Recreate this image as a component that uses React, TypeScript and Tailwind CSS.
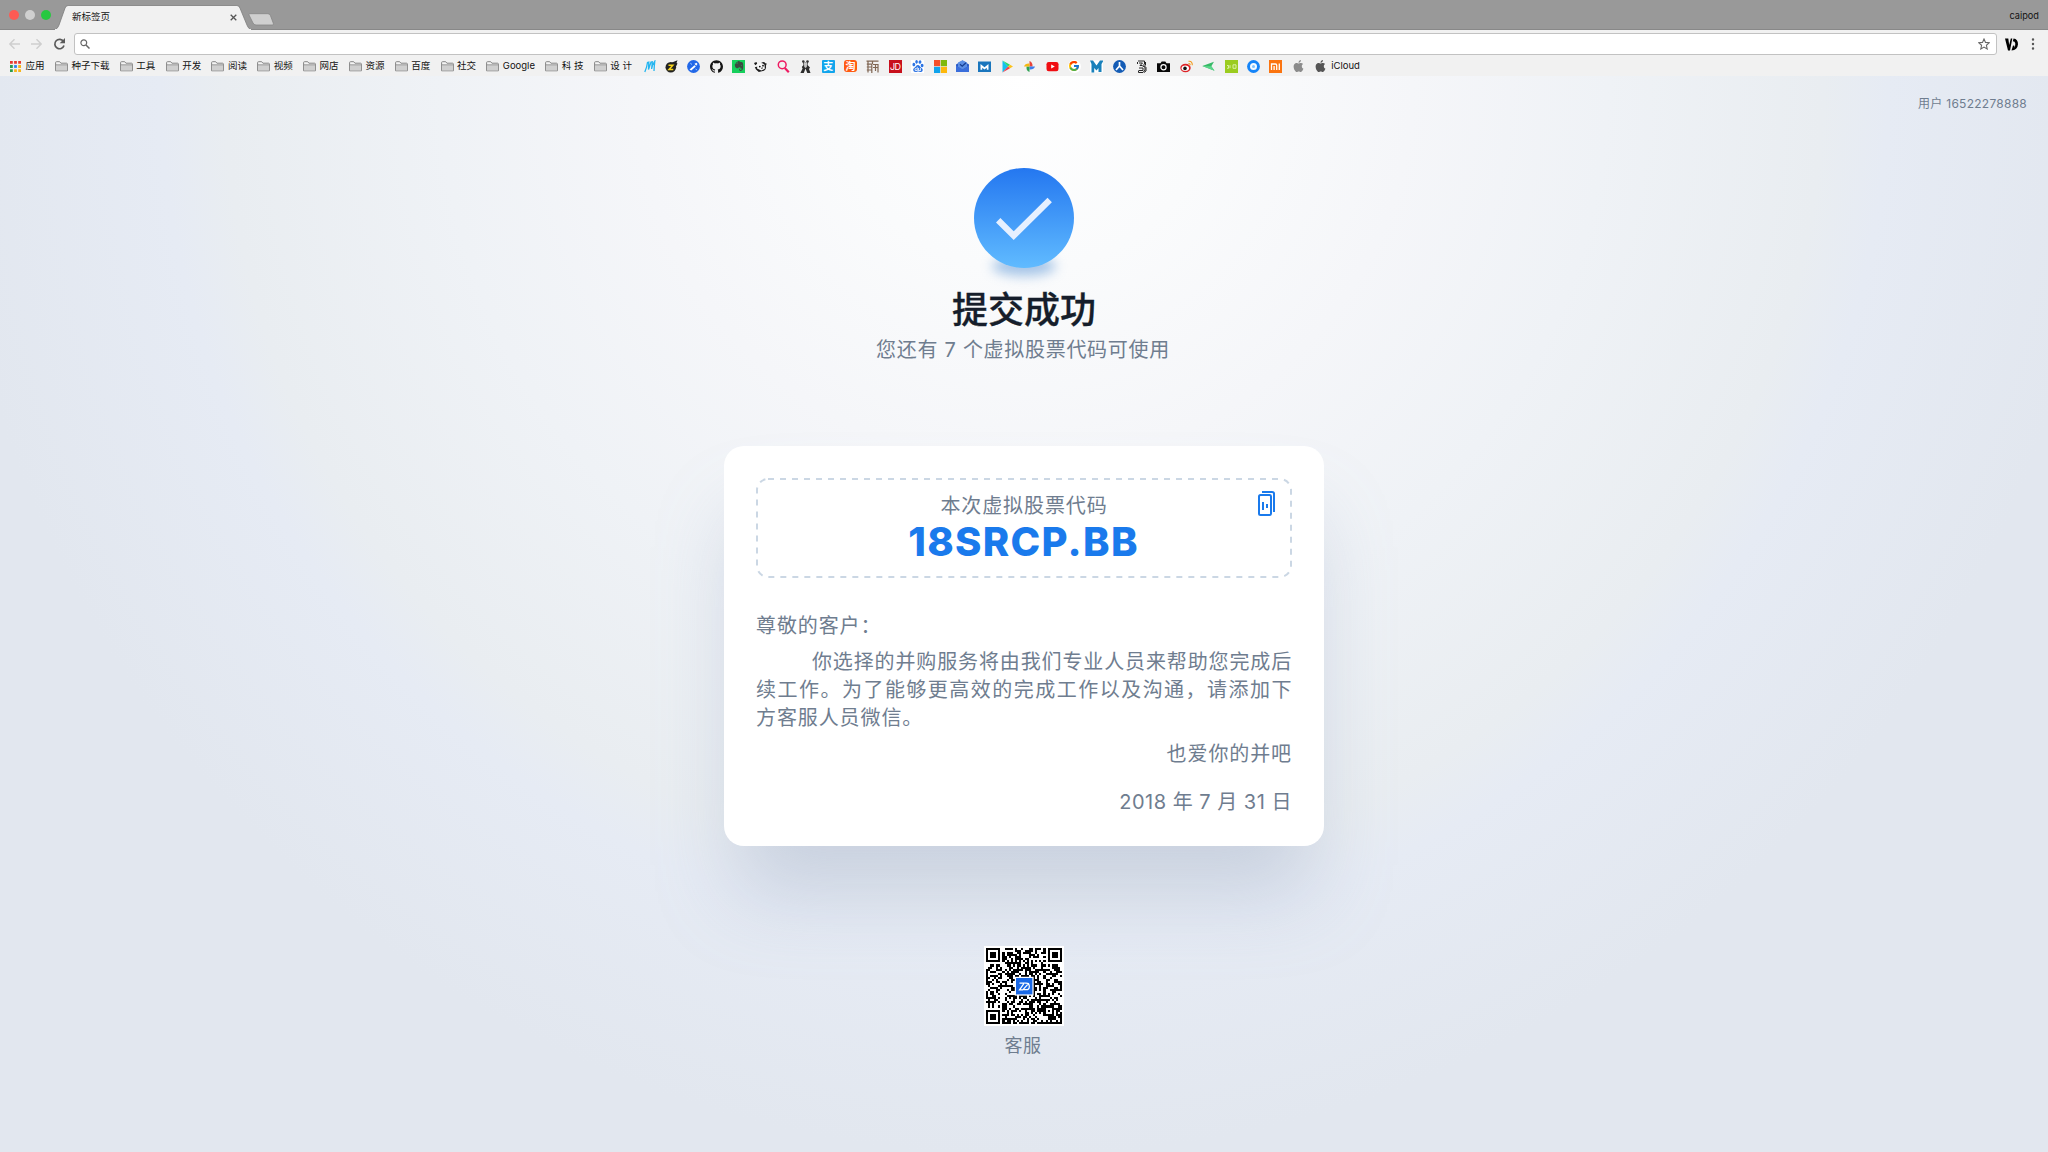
import React from "react";
import { SiGithub, SiEvernote, SiApple, SiBaidu } from "react-icons/si";
import { FcGoogle } from "react-icons/fc";

const zh = "font-['Inter','Noto_Sans_CJK_SC',sans-serif]";

function Folder() {
  return (
    <svg className="h-[11px] w-[13px] shrink-0" viewBox="0 0 13 11">
      <path d="M.6 9.8V1.6Q.6.7 1.5.7h3.2l1.2 1.5h5.6q.9 0 .9.9v6.7z" fill="#f4f4f4" stroke="#858585" />
      <path d="M1 3.9h11v5.5H1z" fill="#cfcfcf" />
      <path d="M.6 3.8h11.8" stroke="#858585" strokeWidth=".8" />
    </svg>
  );
}

const folders = ["种子下载", "工具", "开发", "阅读", "视频", "网店", "资源", "百度", "社交", "Google", "科 技", "设 计"];

function G({ children }: { children: React.ReactNode }) {
  return (
    <svg className="h-[13px] w-[13px] shrink-0" viewBox="0 0 13 13">
      {children}
    </svg>
  );
}

function SiteIcons() {
  return (
    <>
      <G><path d="M1.800 12Q4 7 4.500 2.500L5.800 2.200 5.500 9.500Q7 5 8 2L9.300 1.800 8.600 9Q9.500 4 11.800 1.200 11.200 6 11 11" fill="none" stroke="#23b5f0" strokeWidth="1.300" /></G>
      <G><circle cx="5.800" cy="7.300" r="5.300" fill="#222" /><path d="M7 2.500 12.500.3 11.500 3l1 .5-2 4z" fill="#222" /><path d="M3.500 5.300h4.300L4 9.400h4.300" fill="none" stroke="#f8d51c" strokeWidth="1.500" /></G>
      <G><circle cx="6.500" cy="6.500" r="6.400" fill="#2268e8" /><path d="m2.500 9.500 5-4.200 1.300 1.300-4.500 4zM7.500 3.800l2-1 1 1.300-1.300 1.600z" fill="#fff" /><path d="M3.300 3.200 5 4.500M8.500 9l1.600 1" stroke="#9fc6ff" /></G>
      <SiGithub className="h-[13px] w-[13px] shrink-0 text-[#151515]" />
      <span className="flex h-[13px] w-[13px] shrink-0 items-center justify-center bg-[#16cf5c]"><SiEvernote className="h-[10px] w-[10px] text-[#3c4a42]" /></span>
      <G><path d="M0 3 2.500 2l.7 1.800-2 1.500zM7.500 2.800q2.500-2 3.800.5l1.400.2-.8 2.500q.8 3-1.900 4.700L4.800 12 2 9.500.8 7.200l3-.7z" fill="#1d1d1d" /><path d="M3.500 4q4-2.400 7 .8l.3 4-3.500 1.700L3 8.500z" fill="#f7f7f7" /><circle cx="5.800" cy="6.600" r=".9" fill="#111" /><circle cx="9" cy="5.700" r=".9" fill="#111" /><path d="M7 8.300l2-.4" stroke="#111" strokeWidth=".8" /></G>
      <G><circle cx="5.200" cy="4.800" r="3.900" fill="none" stroke="#ee1b62" strokeWidth="1.500" /><path d="m7.800 8 4 4.200" stroke="#ee1b62" strokeWidth="2.200" /></G>
      <G><circle cx="4.300" cy="1.500" r="1.300" fill="#333" /><circle cx="8.500" cy="1.500" r="1.300" fill="#333" /><path d="M4 2h5l-.5 3 2.500 2.500-1 1.500 1.500 4H8.300L6.500 8.500 4.800 13H1.400L3.600 8.500 2.800 7l1.700-2z" fill="#2c2c2c" /><path d="M4.800 2.300h3.400L7.800 7l-1.300 1-1.200-1z" fill="#c8c8c8" /></G>
      <span className={`flex h-[13px] w-[13px] shrink-0 items-center justify-center rounded-[1px] bg-[#11a5ec] text-[10px] leading-none font-bold text-white ${zh}`}>支</span>
      <span className={`flex h-[12px] w-[13px] shrink-0 items-center justify-center rounded-[3px] bg-[#ff5a10] text-[10px] leading-none font-bold text-white ${zh}`}>淘</span>
      <G><path d="M.5 1.200h12M.8 4.200h5M.8 7h4.500M.8 10h4.500M2 1v11.500M5.800 4v9M7 4.500h5.500M7 7.500h5.500M12 4v8.500M9.500 4v7M6.500 1v3" fill="none" stroke="#806754" strokeWidth="1.200" /></G>
      <span className="flex h-[13px] w-[13px] shrink-0 items-center justify-center bg-[#c8101c] font-['Inter'] text-[9px] leading-none tracking-[-0.5px] text-white">JD</span>
      <span className="flex h-[13px] w-[13px] shrink-0 items-center justify-center bg-white"><SiBaidu className="h-[12px] w-[12px] text-[#2b73e3]" /></span>
      <G><path d="M0 0h6.200v6.200H0z" fill="#f4502a" /><path d="M6.800 0H13v6.200H6.800z" fill="#7fb90a" /><path d="M0 6.800h6.200V13H0z" fill="#10a3ec" /><path d="M6.800 6.800H13V13H6.800z" fill="#fdb80c" /></G>
      <G><path d="M0 4.500 6.500.5 13 4.500V12H0z" fill="#2b5ac4" /><path d="M2 2.500 6.500.300 11 2.500v4.500L6.500 9.500 2 7z" fill="#5b8ee4" /><path d="m4 4.300 2.200 2L10 2.700" fill="none" stroke="#143c90" strokeWidth="1.200" /><path d="m0 5.500 6.500 4L13 5.500V12H0z" fill="#3a6edb" /></G>
      <G><path d="M0 1.500h13v10.500H0z" fill="#1a76bd" /><path d="M2.500 9.800V4l4 3.200 4-3.200v5.800H8.800V7.700L6.500 9.500 4.200 7.700v2.100z" fill="#fff" /></G>
      <G><path d="M1.500.6 7 6.500l-5.500 6z" fill="#16c0ee" /><path d="M1.500.6 9 4.800 7 6.600z" fill="#20d872" /><path d="M9 4.800 12 6.500 9 8.300 7 6.500z" fill="#fcc218" /><path d="M1.500 12.500 9 8.300 7 6.500z" fill="#f23b4b" /></G>
      <G><path d="M6.500 6.500V1q3.300 1 3 5.500z" fill="#e8443a" /><path d="M6.500 6.500H12q-1 3.300-5.500 3z" fill="#3b7ded" /><path d="M6.500 6.500V12q-3.300-1-3-5.500z" fill="#2ea252" /><path d="M6.500 6.500H1q1-3.300 5.500-3z" fill="#f6b811" /></G>
      <G><rect x=".5" y="2" width="12" height="9.200" rx="2.200" fill="#f00d12" /><path d="m5.200 4.600 3.600 2-3.600 2z" fill="#fff" /></G>
      <span className="flex h-[13px] w-[13px] shrink-0 items-center justify-center rounded-full bg-white"><FcGoogle className="h-[12px] w-[12px]" /></span>
      <G><path d="M0 .5h13v12H0z" fill="#fff" /><path d="M0 .5h3l3.500 5 3.500-5h3v1l-1.500 2.500v8h-3V8L6.500 10.500 4.200 8v4.500H1.500V4z" fill="#1981bb" /></G>
      <G><circle cx="6.500" cy="6.500" r="6.400" fill="#145cb5" /><path d="M6.500 2v4.500M6.500 6 3 10M6.500 6 10 10" stroke="#fff" strokeWidth="1.700" /></G>
      <G><path d="M3 1h6.500v3L7.500 6l2.500 1v3l-2 2.500H3.500v-2M4 3h3.500L5 5.500h2M4 8h4v2.500H4M2.500 2v2M10.500 2v3l-1 1 1.500 1.500V11l-2 1.500" fill="none" stroke="#262626" strokeWidth="1" /></G>
      <G><path d="M0 3.200h3.500L4.700 1.500h3.600l1.200 1.700H13V12H0z" fill="#080808" /><circle cx="6.500" cy="7.300" r="2.600" fill="none" stroke="#fff" strokeWidth="1.200" /></G>
      <G><ellipse cx="5.500" cy="8" rx="5.200" ry="4.200" fill="#dd2226" /><ellipse cx="5.300" cy="8.300" rx="3.700" ry="2.700" fill="#fff" /><circle cx="5" cy="8.400" r="1.800" fill="#141414" /><path d="M8.500 1.300q4-.5 3.800 4M8.500 3.600q1.800-.3 1.600 1.600" fill="none" stroke="#f39a1e" strokeWidth="1.100" /></G>
      <G><path d="M.3 6 12 1.800 9.300 6.300l3.200 4.500z" fill="#37b967" /><path d="m.3 6 9 .3 3.200 4.500z" fill="#5bd68a" /></G>
      <G><path d="M0 0h13v13H0z" fill="#9bcc1f" /><path d="M2 5.500h1.500v2.800H2M5 5.200v3M8 4.800h3v3.500H8z" fill="none" stroke="#e2f5b2" strokeWidth=".9" /></G>
      <G><circle cx="6.500" cy="6.500" r="6.400" fill="#1484f8" /><circle cx="6.500" cy="6.500" r="3.500" fill="#f4faff" /><circle cx="6.500" cy="6.500" r="1.500" fill="#7fc2fc" /></G>
      <G><path d="M0 0h13v13H0z" fill="#fb7410" /><path d="M2.500 10V4h4q1.200 0 1.200 1.200V10M5.100 6v4M10.300 3.500V10" fill="none" stroke="#fff" strokeWidth="1.300" /></G>
      <SiApple className="h-[12px] w-[13px] shrink-0 text-[#8b8b8b]" />
      <span className="flex items-center gap-[4px]"><SiApple className="h-[12px] w-[13px] shrink-0 text-[#555]" /><span>iCloud</span></span>
    </>
  );
}

function Browser() {
  return (
    <header className={`h-[76px] bg-[#f1f1f1] text-[9.5px] text-[#111] ${zh}`}>
      <div className="flex h-[30px] items-end justify-between border-b border-[#888] bg-[#999]">
        <div className="flex h-full items-center gap-[4px]">
          <div className="ml-[9px] flex gap-[6px]">
            <span className="h-[10px] w-[10px] rounded-full bg-[#fc5b54]" />
            <span className="h-[10px] w-[10px] rounded-full bg-[#cfcfcf]" />
            <span className="h-[10px] w-[10px] rounded-full bg-[#27c840]" />
          </div>
          <div className="relative mt-[6px] h-[25px] w-[196px]">
            <svg className="absolute inset-0 h-full w-full" viewBox="0 0 195 25" preserveAspectRatio="none">
              <path d="M1 24Q3 23 4 20L10 3q1-2.500 3-2.500h168q2 0 3 2.500l7 17q1 3 3 4v2H0z" fill="#f1f1f1" stroke="#7d7d7d" strokeWidth=".8" />
              <path d="M0 24.500h195" stroke="#f1f1f1" strokeWidth="1" />
            </svg>
            <div className="relative flex h-[25px] items-center justify-between pr-[14px] pl-[17px]">
              <span>新标签页</span>
              <svg className="h-[7px] w-[7px]" viewBox="0 0 7 7"><path d="m.7.7 5.600 5.600M6.300.7.700 6.300" stroke="#555" strokeWidth="1.300" /></svg>
            </div>
          </div>
          <svg className="mt-[9px] -ml-[7px] h-[13px] w-[27px]" viewBox="0 0 27 13"><path d="M1.500.7h18.300q2 0 2.700 2l2.800 7.500q.6 1.800-1 1.800H8Q6 12 5 10L1 2Q.6.7 1.500.7z" fill="#cfcfcf" stroke="#858585" strokeWidth=".8" /></svg>
        </div>
        <span className="mr-[9px] mb-[6px] text-[9.2px]">caipod</span>
      </div>
      <div className="flex h-[28px] items-center">
        <svg className="ml-[8px] h-[14px] w-[58px]" viewBox="0 0 58 14">
          <path d="M12 7H2M6.500 2.200 1.800 7l4.700 4.800M23 7h10M28.500 2.200 33.200 7l-4.700 4.800" fill="none" stroke="#cecece" strokeWidth="1.400" />
          <path d="M55.500 4.500A4.700 4.700 0 1 0 56 8.500" fill="none" stroke="#5a5a5a" strokeWidth="1.700" />
          <path d="M57 1v5.300h-5.300z" fill="#5a5a5a" />
        </svg>
        <div className="ml-[7.5px] flex h-[22px] w-[1923px] items-center justify-between rounded-[3px] border border-[#c2c2c2] bg-white px-[5.5px]">
          <svg className="h-[10px] w-[10px]" viewBox="0 0 10 10"><circle cx="3.800" cy="3.800" r="2.900" fill="none" stroke="#666" strokeWidth="1.200" /><path d="m6 6 3.500 3.500" stroke="#666" strokeWidth="1.500" /></svg>
          <svg className="h-[12px] w-[12px]" viewBox="0 0 12 12"><path d="m6 1 1.500 3.400 3.700.4-2.800 2.500.8 3.700L6 9.100 2.800 11l.8-3.700L.8 4.800l3.700-.4z" fill="none" stroke="#666" strokeWidth="1.100" /></svg>
        </div>
        <svg className="ml-[8px] h-[13px] w-[13px]" viewBox="0 0 13 13"><path d="M0 .5h3.300L4.200 7 5.800.5h1.500L5 12.500H3zM6.500 12.500 8 7.500l1.500.3-.6 2Q10.500 8.500 10.300 5.500 10 3.300 7.800 3.300L8.600.5Q13 1 13 6.300 12.500 12 6.500 12.500z" fill="#000" /></svg>
        <svg className="ml-[13.500px] h-[12px] w-[4px]" viewBox="0 0 4 12"><g fill="#555"><circle cx="2" cy="1.500" r="1.200" /><circle cx="2" cy="6" r="1.200" /><circle cx="2" cy="10.500" r="1.200" /></g></svg>
      </div>
      <div className="flex h-[16px] items-center leading-none whitespace-pre">
        <svg className="mr-[4.5px] ml-[10px] h-[11px] w-[11px]" viewBox="0 0 11 11">
          <path d="M0 0h2.800v2.800H0zM4.100 0h2.800v2.800H4.100zM8.200 0H11v2.800H8.200z" fill="#e8392f" />
          <path d="M0 4.100h2.800v2.800H0zM0 8.200h2.800V11H0z" fill="#2b9c4c" /><path d="M4.100 4.100h2.800v2.800H4.100z" fill="#2a83f0" />
          <path d="M8.200 4.100H11v2.800H8.200zM4.100 8.200h2.800V11H4.100zM8.200 8.200H11V11H8.200z" fill="#f7b51b" />
        </svg>
        <span className="mr-[10px] w-[19.5px]">应用</span>
        <div className="flex w-[577px] items-center justify-between">
          {folders.map((f) => (
            <span key={f} className="flex items-center gap-[3.5px]"><Folder /><span>{f}</span></span>
          ))}
        </div>
        <div className="ml-[10.5px] flex items-center gap-[9.4px]"><SiteIcons /></div>
      </div>
    </header>
  );
}

const N = 37;
function isDark(r: number, c: number): boolean {
  const corners = [[0, 0], [0, N - 7], [N - 7, 0]];
  for (const [a, b] of corners) {
    const y = r - a, x = c - b;
    if (y >= -1 && y <= 7 && x >= -1 && x <= 7) {
      const d = Math.max(Math.abs(y - 3), Math.abs(x - 3));
      return d === 3 || d <= 1;
    }
  }
  const d = Math.max(Math.abs(r - 30), Math.abs(c - 30));
  if (d <= 2) return d !== 1;
  if (r === 6 || c === 6) return (r + c) % 2 === 0;
  let h = (r * 73856093) ^ (c * 19349663) ^ 0x5bd1e995;
  h = Math.imul(h ^ (h >>> 13), 1274126177);
  return ((h ^ (h >>> 16)) & 255) < 132;
}

let modules = "";
for (let r = 0; r < N; r++) for (let c = 0; c < N; c++) if (isDark(r, c)) modules += `M${c} ${r}h1v1h-1z`;

function QrCode() {
  return (
    <svg className="h-[80px] w-[80px] bg-white" viewBox="-1 -1 39 39">
      <path d={modules} fill="#000" shapeRendering="crispEdges" />
      <path d="M14 14h9.200v9.200H14z" fill="#fff" />
      <path d="M14.600 14.600h8v8h-8z" fill="#1968e6" />
      <path d="M16.300 17.100h2.300l-2.300 3.300h1.600l3-3.300M18.300 20.300h1.200a1.600 1.600 0 0 0 0-3.200h-.5" fill="none" stroke="#fff" strokeWidth=".6" />
    </svg>
  );
}

export default function App() {
  return (
    <div className="flex h-[1152px] w-[2048px] flex-col overflow-hidden">
      <Browser />
      <main className={`relative flex flex-1 flex-col items-center bg-[radial-gradient(circle_1080px_at_50%_0,#ffffff_0%,#fafbfc_18%,#f5f6f9_36%,#eff2f6_54%,#e9edf1_74%,#e6ebf4_80%,#e2e7ef_100%)] text-[#6f7d8f] ${zh}`}>
        <div className="absolute top-[19px] right-[21px] text-[12px] leading-[18px] tracking-[0.26px]">用户 16522278888</div>
        <div className="relative mt-[92px] h-[100px] w-[100px]">
          <div className="absolute top-[88px] left-[18px] h-[20px] w-[64px] rounded-[50%] bg-[#3f83cf]/45 blur-[6px]" />
          <svg className="relative h-[100px] w-[100px]" viewBox="0 0 100 100">
            <defs><linearGradient id="disc" x1="0" y1="0" x2="0" y2="1"><stop stopColor="#2477f0" /><stop offset="1" stopColor="#60bbff" /></linearGradient></defs>
            <circle cx="50" cy="50" r="50" fill="url(#disc)" />
            <path d="m24.200 52.200 15.500 15.500L75.700 32" fill="none" stroke="#e6f0ff" strokeWidth="6.200" />
          </svg>
        </div>
        <h1 className="mt-[17px] text-[36px] leading-[50px] font-medium text-[#161e2b] [-webkit-text-stroke:0.3px_#161e2b]">提交成功</h1>
        <p className="mt-px -ml-[2px] h-[28px] text-[20px] leading-[28px] tracking-[0.7px] whitespace-nowrap">您还有 7 个虚拟股票代码可使用</p>
        <section className="mt-[82px] h-[400px] w-[600px] shrink-0 rounded-[20px] bg-white px-[32px] pt-[32px] text-[20px] leading-[28px] tracking-[0.9px] shadow-[0_60px_80px_-14px_rgba(142,157,190,0.36)]">
          <div className="relative flex h-[100px] flex-col items-center">
            <svg className="absolute inset-0 h-full w-full" viewBox="0 0 536 100">
              <rect x="1" y="1" width="534" height="98" rx="11" fill="none" stroke="#cbd7e4" strokeWidth="2" strokeDasharray="6 6" />
            </svg>
            <span className="mt-[14px]">本次虚拟股票代码</span>
            <strong className="mt-[-2px] -ml-[1px] text-[40px] leading-[48px] font-extrabold tracking-[1.3px] text-[#1a7aec]">18SRCP.BB</strong>
            <svg className="absolute top-[12px] right-[17px] h-[27px] w-[18px]" viewBox="0 0 18 27">
              <path d="M3.500 5h9q1.500 0 1.500 1.500v17q0 1.500-1.500 1.500h-9Q2 25 2 23.500v-17Q2 5 3.500 5zM5 2h10q2 0 2 1.500V22M6 12v8M10 14v4" fill="none" stroke="#1a7aec" strokeWidth="2" />
            </svg>
          </div>
          <p className="mt-[34px]">尊敬的客户：</p>
          <div className="mt-[8px]">
            <p className="-mr-px pl-[56px] tracking-[0.87px] whitespace-nowrap">你选择的并购服务将由我们专业人员来帮助您完成后</p>
            <p className="tracking-[1.48px] whitespace-nowrap">续工作。为了能够更高效的完成工作以及沟通，请添加下</p>
            <p>方客服人员微信。</p>
          </div>
          <p className="mt-[8px] text-right">也爱你的并吧</p>
          <p className="mt-[20px] text-right tracking-[0.5px]">2018 年 7 月 31 日</p>
        </section>
        <div className="mt-[100px] flex flex-col items-center gap-[7px] text-[18px] leading-[26px] tracking-[0.5px]">
          <QrCode />
          <span className="-ml-[2px]">客服</span>
        </div>
      </main>
    </div>
  );
}
